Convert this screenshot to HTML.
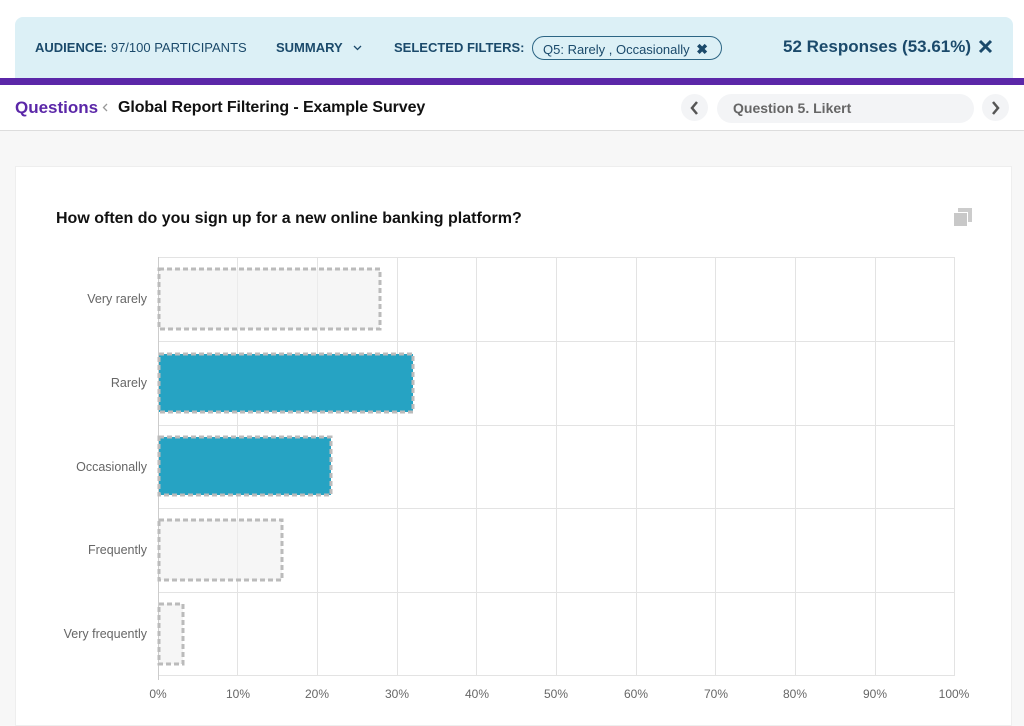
<!DOCTYPE html>
<html><head><style>
*{margin:0;padding:0;box-sizing:border-box}
body{width:1024px;height:716px;overflow:hidden;background:#f7f7f7;font-family:"Liberation Sans",sans-serif;position:relative}
.a{position:absolute}
</style></head><body>
<div class="a" style="left:0;top:0;width:1024px;height:78px;background:#fff"></div>
<div class="a" style="left:15px;top:17px;width:998px;height:62px;background:#dcf0f6;border-radius:8px 8px 0 0"></div>
<div class="a" style="left:0;top:78px;width:1024px;height:7px;background:#5b27a8"></div>
<div class="a" style="left:35px;top:40px;font-size:13px;color:#1b4a6b"><b>AUDIENCE:</b> 97/100 PARTICIPANTS</div>
<div class="a" style="left:276px;top:40px;font-size:13px;color:#1b4a6b;font-weight:bold">SUMMARY</div>
<svg class="a" style="left:353px;top:45px" width="9" height="6"><path d="M1 1L4.5 4.5L8 1" stroke="#1b4a6b" stroke-width="1.3" fill="none"/></svg>
<div class="a" style="left:394px;top:40px;font-size:13px;color:#1b4a6b;font-weight:bold">SELECTED FILTERS:</div>
<div class="a" style="left:532px;top:36px;width:190px;height:24px;border:1px solid #2c6584;border-radius:12px;font-size:13px;color:#1b4a6b;padding:4px 0 0 10px;white-space:nowrap">Q5: Rarely , Occasionally <b style="font-size:14px;margin-left:3px">&#10006;</b></div>
<div class="a" style="left:783px;top:37px;font-size:17px;color:#1b4a6b;font-weight:bold">52 Responses (53.61%)</div>
<svg class="a" style="left:978px;top:39px" width="15" height="15"><path d="M2 2L13 13M13 2L2 13" stroke="#1b4a6b" stroke-width="3"/></svg>
<div class="a" style="left:0;top:85px;width:1024px;height:46px;background:#fff;border-bottom:1px solid #ddd"></div>
<div class="a" style="left:15px;top:98px;font-size:17px;color:#5b27a8;font-weight:bold">Questions</div>
<svg class="a" style="left:102px;top:103px" width="6" height="9"><path d="M5 1L1.5 4.5L5 8" stroke="#999" stroke-width="1.3" fill="none"/></svg>
<div class="a" style="left:118px;top:99px;font-size:16px;color:#111;font-weight:bold;letter-spacing:-0.1px">Global Report Filtering - Example Survey</div>
<div class="a" style="left:681px;top:94px;width:27px;height:27px;border-radius:50%;background:#f3f4f6"></div>
<svg class="a" style="left:689px;top:100px" width="10" height="16"><path d="M8 2L3 8L8 14" stroke="#555" stroke-width="2.5" fill="none"/></svg>
<div class="a" style="left:717px;top:94px;width:257px;height:29px;border-radius:15px;background:#f3f4f6;color:#666;font-size:14px;font-weight:bold;padding:6px 0 0 16px">Question 5. Likert</div>
<div class="a" style="left:982px;top:94px;width:27px;height:27px;border-radius:50%;background:#f3f4f6"></div>
<svg class="a" style="left:991px;top:100px" width="10" height="16"><path d="M2 2L7 8L2 14" stroke="#555" stroke-width="2.5" fill="none"/></svg>
<div class="a" style="left:15px;top:166px;width:997px;height:560px;background:#fff;border:1px solid #eee"></div>
<div class="a" style="left:56px;top:210px;font-size:16px;font-weight:bold;color:#111">How often do you sign up for a new online banking platform?</div>
<div class="a" style="left:958px;top:208px;width:14px;height:14px;background:#ccc"></div>
<div class="a" style="left:953px;top:212px;width:15px;height:15px;background:#c8c8c8;border:1px solid #fff"></div>
<svg class="a" style="left:0;top:0" width="1024" height="716">
<g stroke="#e3e3e3" stroke-width="1">
<line x1="158" y1="257.5" x2="955" y2="257.5"/><line x1="158" y1="341.5" x2="955" y2="341.5"/><line x1="158" y1="425.5" x2="955" y2="425.5"/><line x1="158" y1="508.5" x2="955" y2="508.5"/><line x1="158" y1="592.5" x2="955" y2="592.5"/><line x1="158" y1="675.5" x2="955" y2="675.5"/>
<line x1="237.5" y1="257" x2="237.5" y2="676"/><line x1="317.5" y1="257" x2="317.5" y2="676"/><line x1="397.5" y1="257" x2="397.5" y2="676"/><line x1="476.5" y1="257" x2="476.5" y2="676"/><line x1="556.5" y1="257" x2="556.5" y2="676"/><line x1="636.5" y1="257" x2="636.5" y2="676"/><line x1="715.5" y1="257" x2="715.5" y2="676"/><line x1="795.5" y1="257" x2="795.5" y2="676"/><line x1="875.5" y1="257" x2="875.5" y2="676"/><line x1="954.5" y1="257" x2="954.5" y2="676"/>
</g>
<line x1="158.5" y1="257" x2="158.5" y2="680" stroke="#ccc"/>
<g stroke="#bbb" stroke-width="3" stroke-dasharray="5,3">
<rect x="159" y="269" width="221" height="60" fill="rgba(240,240,240,0.6)"/>
<rect x="159" y="354" width="254" height="58" fill="#26a3c3"/>
<rect x="159" y="437" width="172" height="58" fill="#26a3c3"/>
<rect x="159" y="520" width="123" height="60" fill="rgba(240,240,240,0.6)"/>
<rect x="159" y="604" width="24" height="60" fill="rgba(240,240,240,0.6)"/>
</g>
<g font-family="Liberation Sans" font-size="12.5" fill="#666" text-anchor="end">
<text x="147" y="303">Very rarely</text><text x="147" y="387">Rarely</text><text x="147" y="471">Occasionally</text><text x="147" y="554">Frequently</text><text x="147" y="638">Very frequently</text>
</g>
<g font-family="Liberation Sans" font-size="12" fill="#666" text-anchor="middle">
<text x="158" y="698">0%</text><text x="238" y="698">10%</text><text x="317" y="698">20%</text><text x="397" y="698">30%</text><text x="477" y="698">40%</text><text x="556" y="698">50%</text><text x="636" y="698">60%</text><text x="716" y="698">70%</text><text x="795" y="698">80%</text><text x="875" y="698">90%</text><text x="954" y="698">100%</text>
</g>
</svg>
</body></html>
